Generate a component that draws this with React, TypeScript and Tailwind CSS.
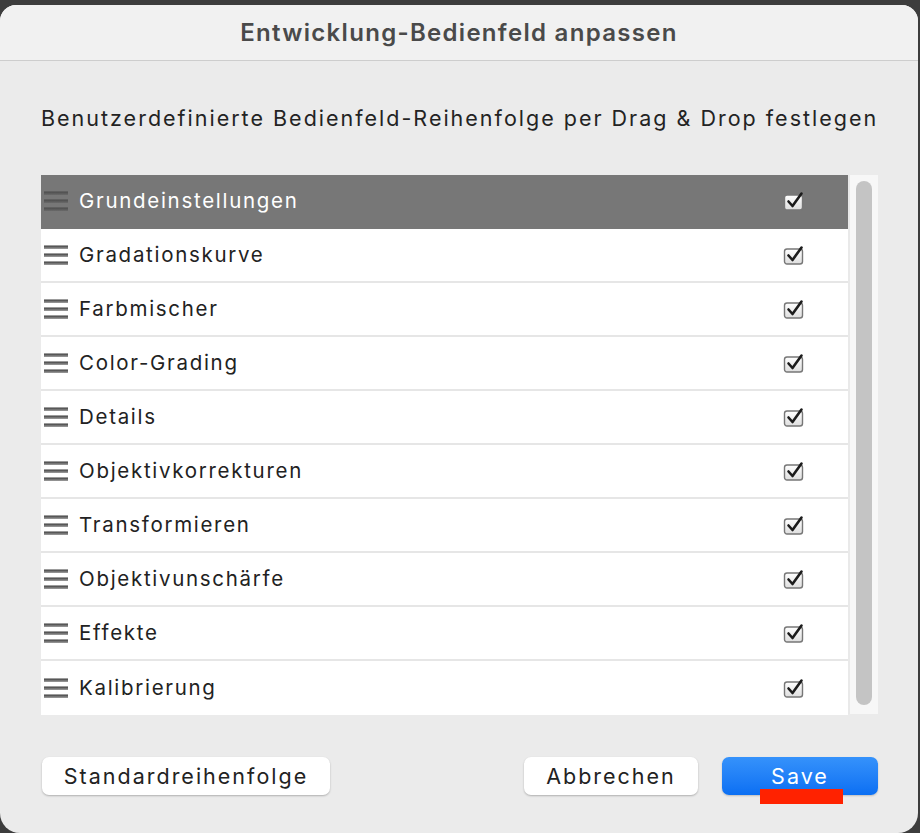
import React from "react";

const items = [
  "Grundeinstellungen",
  "Gradationskurve",
  "Farbmischer",
  "Color-Grading",
  "Details",
  "Objektivkorrekturen",
  "Transformieren",
  "Objektivunschärfe",
  "Effekte",
  "Kalibrierung",
];

function Handle({ selected }: { selected: boolean }) {
  const c1 = selected ? "#4a4a4a" : "#3a3a3a";
  const c2 = selected ? "#6a6a6a" : "#a0a0a0";
  const id = selected ? "hs" : "hn";
  return (
    <svg width="24" height="20" viewBox="0 0 24 20" className="shrink-0">
      <defs>
        <linearGradient id={id} x1="0" y1="0" x2="0" y2="1">
          <stop offset="0" stopColor={c1} />
          <stop offset="1" stopColor={c2} />
        </linearGradient>
      </defs>
      {[2, 10, 18].map((y) => (
        <rect key={y} x="0" y={y - 1.5} width="24" height="3.5" fill={`url(#${id})`} />
      ))}
    </svg>
  );
}

function Check() {
  return (
    <svg width="22" height="22" viewBox="0 0 22 22">
      <defs>
        <linearGradient id="cb" x1="0" y1="0" x2="0" y2="1">
          <stop offset="0" stopColor="#ffffff" />
          <stop offset="1" stopColor="#dedede" />
        </linearGradient>
      </defs>
      <rect x="1.5" y="5" width="18" height="15" rx="2.5" fill="url(#cb)" stroke="#777777" strokeWidth="1.4" />
      <path d="M5.5 11.5 L9.5 16 L18.5 3.5" fill="none" stroke="#1c1c1c" strokeWidth="2.6" strokeLinecap="round" strokeLinejoin="round" />
    </svg>
  );
}

export default function App() {
  return (
    <div
      className="w-[920px] h-[833px] bg-[#3d3d3d] pt-[5px] overflow-hidden"
      style={{ fontFamily: "Inter, 'Noto Sans', sans-serif" }}
    >
      <div className="w-[918px] h-[828px] bg-[#ebebeb] rounded-t-[16px] rounded-b-[20px] overflow-hidden flex flex-col">
        <div className="h-[56px] shrink-0 bg-[#f1f1f1] border-b border-[#cdcdcd] flex items-center justify-center">
          <span className="text-[24px] font-semibold text-[#4a4a4a] tracking-[1.3px]">
            Entwicklung-Bedienfeld anpassen
          </span>
        </div>
        <div className="flex flex-col pl-[41px] pr-[40px]">
          <div className="h-[114px] flex items-center">
            <span className="text-[21.5px] text-[#232323] tracking-[2px] whitespace-nowrap">
              Benutzerdefinierte Bedienfeld-Reihenfolge per Drag &amp; Drop festlegen
            </span>
          </div>
          <div className="flex w-[837px] h-[539px] bg-white">
            <div className="w-[807px] flex flex-col">
              {items.map((name, i) => {
                const sel = i === 0;
                return (
                  <div
                    key={name}
                    className={`h-[54px] shrink-0 flex items-center ${
                      i === items.length - 1 ? "" : "border-b-2"
                    } ${sel ? "bg-[#777777] border-[#777777]" : "bg-white border-[#e6e6e6]"}`}
                  >
                    <div className="pl-[3px] pr-[11px] flex items-center">
                      <Handle selected={sel} />
                    </div>
                    <span
                      className={`text-[20.5px] tracking-[1.7px] flex-1 ${sel ? "text-white" : "text-[#222]"}`}
                    >
                      {name}
                    </span>
                    <div className="w-[76px] flex items-center justify-center pr-[32px]">
                      <Check />
                    </div>
                  </div>
                );
              })}
            </div>
            <div className="w-[30px] bg-[#f7f7f7] border-l-2 border-[#e9e9e9] pt-[6px] pb-[9px] pl-[6px] pr-[6px]">
              <div className="w-[16px] h-full rounded-full bg-[#c4c4c4]" />
            </div>
          </div>
          <div className="h-[43px]" />
          <div className="flex items-center pl-[1px]">
            <button className="w-[288px] h-[38px] rounded-[7px] bg-white shadow-[0_1px_2px_rgba(0,0,0,0.25)] text-[21.5px] tracking-[2px] text-[#222] flex items-center justify-center">
              Standardreihenfolge
            </button>
            <div className="flex-1" />
            <button className="w-[174px] h-[38px] rounded-[7px] bg-white shadow-[0_1px_2px_rgba(0,0,0,0.25)] text-[21.5px] tracking-[2px] text-[#222] flex items-center justify-center">
              Abbrechen
            </button>
            <div className="w-[24px]" />
            <button className="relative w-[156px] h-[38px] rounded-[7px] bg-gradient-to-b from-[#3592fb] to-[#0a6ff3] shadow-[0_1px_2px_rgba(0,0,0,0.2)] text-[21.5px] tracking-[2px] text-white flex items-center justify-center">
              <span className="relative z-10">Save</span>
              <span className="absolute left-[38px] top-[32px] w-[83px] h-[15px] bg-[#ff2200] z-20" />
            </button>
          </div>
        </div>
      </div>
    </div>
  );
}
